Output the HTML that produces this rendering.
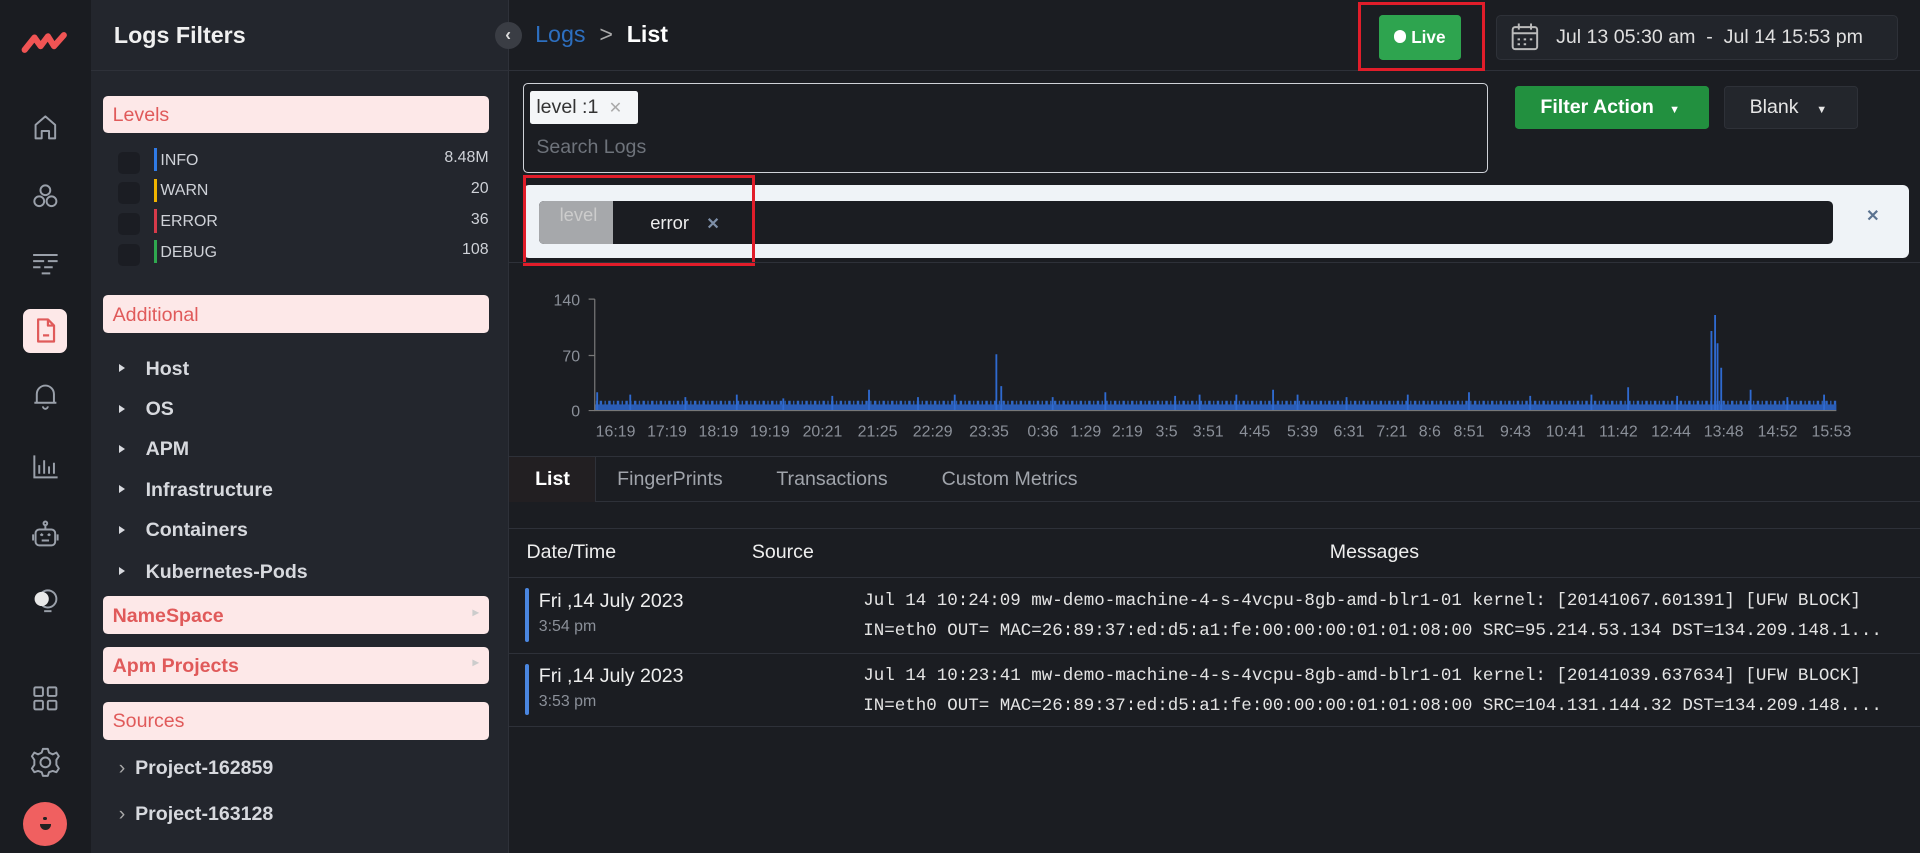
<!DOCTYPE html>
<html><head><meta charset="utf-8"><style>
*{box-sizing:border-box;margin:0;padding:0}
html,body{width:1920px;height:853px;overflow:hidden;background:#1b1d22}
#r{zoom:1.22449;width:1568px;height:697px;position:relative;font-family:"Liberation Sans",sans-serif;color:#e6e6e6;background:#1b1d22}
.a{position:absolute}
.rail{left:0;top:0;width:74px;height:697px;background:#1a1c21}
.panel{left:74px;top:0;width:342px;height:697px;background:#23262d;border-right:1px solid #2e3139}
.hdr{left:84px;width:315px;height:31px;background:#fde8e8;border-radius:4px;color:#e05a5a;font-size:16px;padding:7px 8px}
.lv{left:96px;font-size:13px;color:#cfd2d8}
.cb{left:96px;width:18px;height:18px;border-radius:4px;background:#1b1d23}
.bar{left:126px;width:2px;height:19px}
.num{right:1169px;font-size:13px;color:#cfd2d8;text-align:right}
.tr{left:97px;font-size:16px;font-weight:bold;color:#d7d9de}
.tr:before{content:"";display:inline-block;border-left:5px solid #d7d9de;border-top:4px solid transparent;border-bottom:4px solid transparent;margin-right:17px;vertical-align:2px}
.ic{left:22px;width:30px;height:30px}
.ic svg{width:30px;height:30px;fill:none;stroke:#9aa0aa;stroke-width:1.6}
.mono{font-family:"Liberation Mono",monospace;font-size:14.3px;color:#e4e4e4;left:705px;white-space:nowrap}
</style></head><body><div id="r">
<div class="a rail"></div>
<svg class="a" style="left:17px;top:24px" width="40" height="22" viewBox="0 0 40 22"><path d="M3 17 L11 7 L16 14 L22 6 L27 14 L35 5" stroke="#f05454" stroke-width="5" fill="none" stroke-linejoin="round" stroke-linecap="round"/></svg>
<div class="a ic" style="top:89px"><svg viewBox="0 0 30 30"><path d="M7 24V13L15 6L23 13V24H18V18H12V24Z" stroke-linejoin="round"/></svg></div>
<div class="a ic" style="top:145px"><svg viewBox="0 0 30 30"><circle cx="15" cy="10" r="4"/><circle cx="10" cy="19" r="4"/><circle cx="20" cy="19" r="4"/></svg></div>
<div class="a ic" style="top:199px"><svg viewBox="0 0 30 30"><path d="M5 9H25M5 14H14M17 14H25M5 19H11M14 19H21M12 24H19"/></svg></div>
<div class="a" style="left:19px;top:252px;width:36px;height:36px;background:#fde8e8;border-radius:6px"></div>
<svg class="a" style="left:26px;top:259px" width="22" height="22" viewBox="0 0 22 22"><path d="M5 2H13L18 7V20H5Z M13 2V7H18 M9 15H14" fill="none" stroke="#e05a5a" stroke-width="1.8" stroke-linejoin="round"/></svg>
<div class="a ic" style="top:308px"><svg viewBox="0 0 30 30"><path d="M8 21V14A7 7 0 0 1 22 14V21H8M6 21H24M13 24A2 2 0 0 0 17 24"/></svg></div>
<div class="a ic" style="top:366px"><svg viewBox="0 0 30 30"><path d="M6 6V24H25M10 21V14M14 21V10M18 21V15M22 21V12"/></svg></div>
<div class="a ic" style="top:421px"><svg viewBox="0 0 30 30"><rect x="7" y="11" width="16" height="13" rx="3"/><path d="M15 11V8M5 15V20M25 15V20M11 16L12 15L13 16M17 16L18 15L19 16M12 20H18"/><circle cx="15" cy="6" r="1.5"/></svg></div>
<div class="a ic" style="top:476px"><svg viewBox="0 0 30 30"><circle cx="17" cy="13" r="7"/><circle cx="12" cy="13" r="5" fill="#e8e8e8" stroke="#e8e8e8"/><path d="M14 23H20"/></svg></div>
<div class="a ic" style="top:555px"><svg viewBox="0 0 30 30"><rect x="6" y="6" width="7" height="7" rx="1"/><rect x="17" y="6" width="7" height="7" rx="1"/><rect x="6" y="17" width="7" height="7" rx="1"/><rect x="17" y="17" width="7" height="7" rx="1"/></svg></div>
<div class="a ic" style="top:608px"><svg viewBox="0 0 30 30"><circle cx="15" cy="15" r="4"/><path d="M13 4H17L18 7L21 8.5L24 7L26 10L24 13V17L26 20L24 23L21 22L18 23L17 26H13L12 23L9 22L6 23L4 20L6 17V13L4 10L6 7L9 8.5L12 7Z" stroke-linejoin="round"/></svg></div>
<div class="a" style="left:19px;top:655px;width:36px;height:36px;background:#f06060;border-radius:50%"></div>
<div class="a" style="left:35px;top:667px;width:3px;height:3px;background:#222;border-radius:50%"></div>
<div class="a" style="left:33px;top:673px;width:9px;height:5px;background:#222;border-radius:0 0 5px 5px"></div>

<div class="a panel"></div>
<div class="a" style="left:74px;top:57px;width:342px;height:1px;background:#2e3139"></div>
<div class="a" style="left:93px;top:18px;font-size:19px;font-weight:bold;color:#f0f0f0">Logs Filters</div>
<div class="a hdr" style="top:78px">Levels</div>
<div class="a cb" style="top:124px"></div><div class="a bar" style="top:121px;background:#2f7ae5"></div><div class="a lv" style="left:131px;top:124px">INFO</div><div class="a num" style="top:122px">8.48M</div>
<div class="a cb" style="top:149px"></div><div class="a bar" style="top:146px;background:#f0b400"></div><div class="a lv" style="left:131px;top:149px">WARN</div><div class="a num" style="top:147px">20</div>
<div class="a cb" style="top:174px"></div><div class="a bar" style="top:171px;background:#d63a4a"></div><div class="a lv" style="left:131px;top:174px">ERROR</div><div class="a num" style="top:172px">36</div>
<div class="a cb" style="top:199px"></div><div class="a bar" style="top:196px;background:#2fa84f"></div><div class="a lv" style="left:131px;top:199px">DEBUG</div><div class="a num" style="top:197px">108</div>
<div class="a hdr" style="top:241px">Additional</div>
<div class="a tr" style="top:292px">Host</div>
<div class="a tr" style="top:325px">OS</div>
<div class="a tr" style="top:358px">APM</div>
<div class="a tr" style="top:391px">Infrastructure</div>
<div class="a tr" style="top:424px">Containers</div>
<div class="a tr" style="top:458px">Kubernetes-Pods</div>
<div class="a hdr" style="top:487px;font-weight:bold">NameSpace<span style="float:right;color:#ccc;font-size:10px">&#9656;</span></div>
<div class="a hdr" style="top:528px;font-weight:bold">Apm Projects<span style="float:right;color:#ccc;font-size:10px">&#9656;</span></div>
<div class="a hdr" style="top:573px">Sources</div>
<div class="a" style="left:97px;top:618px;font-size:16px;font-weight:bold;color:#d7d9de"><span style="font-weight:normal;color:#aaa;margin-right:8px">&#8250;</span>Project-162859</div>
<div class="a" style="left:97px;top:656px;font-size:16px;font-weight:bold;color:#d7d9de"><span style="font-weight:normal;color:#aaa;margin-right:8px">&#8250;</span>Project-163128</div>

<div class="a" style="left:404px;top:18px;width:22px;height:22px;border-radius:50%;background:#3a3d44;color:#ddd;font-size:14px;text-align:center;line-height:21px;font-weight:bold">&#8249;</div>
<div class="a" style="left:416px;top:57px;width:1152px;height:1px;background:#2e3139"></div>
<div class="a" style="left:437px;top:17px;font-size:19px"><span style="color:#2d6fc0">Logs</span> <span style="color:#aaa;margin:0 6px">&gt;</span> <span style="color:#fff;font-weight:bold">List</span></div>
<div class="a" style="left:1109px;top:2px;width:104px;height:56px;border:3px solid #e11d2a"></div>
<div class="a" style="left:1126px;top:12px;width:67px;height:37px;background:#2ea44f;border-radius:3px;color:#fff;font-size:14px;font-weight:bold;line-height:37px;text-align:center"><span style="display:inline-block;width:10px;height:10px;background:#fff;border-radius:50%;margin-right:4px"></span>Live</div>
<div class="a" style="left:1222px;top:12px;width:328px;height:37px;background:#22252b;border:1px solid #2e3138;border-radius:4px;font-size:16px;color:#e0e0e0;line-height:35px;padding-left:48px">Jul 13 05:30 am &nbsp;- &nbsp;Jul 14 15:53 pm</div>
<svg class="a" style="left:1232px;top:17px" width="26" height="26" viewBox="0 0 26 26" fill="none" stroke="#bbb" stroke-width="1.6"><rect x="3" y="5" width="20" height="18" rx="2"/><path d="M3 10H23M8 2V7M18 2V7M7 15H9M12 15H14M17 15H19M7 19H9M12 19H14"/></svg>

<div class="a" style="left:427px;top:68px;width:788px;height:73px;border:1px solid #cfd2d8;border-radius:4px"></div>
<div class="a" style="left:433px;top:74px;width:88px;height:27px;background:#f4f6f8;border-radius:2px;color:#333;font-size:16px;padding:4px 5px">level :1 <span style="color:#aaa;font-size:13px;margin-left:4px">&#10005;</span></div>
<div class="a" style="left:438px;top:111px;font-size:16px;color:#6e737b">Search Logs</div>
<div class="a" style="left:1237px;top:70px;width:159px;height:35px;background:#22903f;border-radius:3px;color:#fff;font-size:16px;font-weight:bold;line-height:35px;padding-left:21px">Filter Action <span style="font-size:9px;margin-left:8px">&#9660;</span></div>
<div class="a" style="left:1408px;top:70px;width:109px;height:35px;background:#23262c;border:1px solid #2e3138;border-radius:3px;color:#e6e6e6;font-size:16px;line-height:33px;padding-left:20px">Blank <span style="font-size:9px;margin-left:10px">&#9660;</span></div>

<div class="a" style="left:427px;top:151px;width:1132px;height:60px;background:#eff3f7;border-radius:5px"></div>
<div class="a" style="left:440px;top:164px;width:1057px;height:35px;background:#1b1d22;border-radius:4px"></div>
<div class="a" style="left:440px;top:164px;width:61px;height:35px;background:#a6a8ab;border-radius:4px 0 0 4px;color:#ccc;font-size:15px;padding:3px 0 0 17px">level</div>
<div class="a" style="left:531px;top:173px;font-size:15px;color:#eee">error <span style="color:#7e8fa8;font-size:13px;font-weight:bold;margin-left:10px">&#10005;</span></div>
<div class="a" style="left:1524px;top:168px;color:#5a7290;font-size:13px;font-weight:bold">&#10005;</div>
<div class="a" style="left:427px;top:143px;width:190px;height:74px;border:3px solid #e11d2a"></div>
<div class="a" style="left:416px;top:214px;width:1152px;height:1px;background:#2e3139"></div>

<svg class="a" style="left:416px;top:230px" width="1152" height="135" viewBox="416 230 1152 135">
<defs><pattern id="p" width="7" height="20" patternUnits="userSpaceOnUse"><rect width="2" height="20" fill="#2f67c6"/><rect x="4" y="4" width="1" height="16" fill="#2f67c6"/></pattern></defs>
<rect x="486" y="327" width="1014" height="8" fill="url(#p)"/>
<rect x="486" y="330" width="1014" height="5" fill="#2a5cb5"/>
<g stroke="#2f6ad0" stroke-width="1.5">
<path d="M488 335V320M515 335V322M560 335V324M602 335V322M640 335V325M680 335V323M710 335V318M750 335V324M780 335V322M814 335V289M818 335V315M860 335V324M903 335V320M960 335V323M980 335V322M1010 335V322M1040 335V318M1060 335V322M1100 335V324M1150 335V322M1200 335V320M1250 335V323M1300 335V322M1330 335V316M1370 335V323M1398 335V270M1401 335V257M1403 335V280M1406 335V300M1430 335V318M1460 335V324M1490 335V322"/>
</g>
<path d="M486 244V335H1500" stroke="#777" fill="none"/>
<path d="M481 244H486M481 290H486M481 335H486" stroke="#777"/>
<text x="474" y="249" fill="#8b9099" font-size="13" text-anchor="end" font-family="Liberation Sans">140</text>
<text x="474" y="295" fill="#8b9099" font-size="13" text-anchor="end" font-family="Liberation Sans">70</text>
<text x="474" y="340" fill="#8b9099" font-size="13" text-anchor="end" font-family="Liberation Sans">0</text>
<text y="356" fill="#8b9099" font-size="13" font-family="Liberation Sans" text-anchor="middle">
<tspan x="503">16:19</tspan><tspan x="545">17:19</tspan><tspan x="587">18:19</tspan><tspan x="629">19:19</tspan><tspan x="672">20:21</tspan><tspan x="717">21:25</tspan><tspan x="762">22:29</tspan><tspan x="808">23:35</tspan><tspan x="852">0:36</tspan><tspan x="887">1:29</tspan><tspan x="921">2:19</tspan><tspan x="953">3:5</tspan><tspan x="987">3:51</tspan><tspan x="1025">4:45</tspan><tspan x="1064">5:39</tspan><tspan x="1102">6:31</tspan><tspan x="1137">7:21</tspan><tspan x="1168">8:6</tspan><tspan x="1200">8:51</tspan><tspan x="1238">9:43</tspan><tspan x="1279">10:41</tspan><tspan x="1322">11:42</tspan><tspan x="1365">12:44</tspan><tspan x="1408">13:48</tspan><tspan x="1452">14:52</tspan><tspan x="1496">15:53</tspan></text>
</svg>

<div class="a" style="left:416px;top:372px;width:1152px;height:1px;background:#2e3139"></div>
<div class="a" style="left:416px;top:373px;width:70px;height:37px;background:#221f22"></div>
<div class="a" style="left:486px;top:409px;width:1082px;height:1px;background:#2e3139"></div>
<div class="a" style="left:486px;top:373px;width:1px;height:37px;background:#2e3139"></div>
<div class="a" style="left:437px;top:382px;font-size:16px;font-weight:bold;color:#fff">List</div>
<div class="a" style="left:504px;top:382px;font-size:16px;color:#a0a4ab">FingerPrints</div>
<div class="a" style="left:634px;top:382px;font-size:16px;color:#a0a4ab">Transactions</div>
<div class="a" style="left:769px;top:382px;font-size:16px;color:#a0a4ab">Custom Metrics</div>
<div class="a" style="left:416px;top:431px;width:1152px;height:1px;background:#2e3139"></div>
<div class="a" style="left:430px;top:442px;font-size:16px;color:#eee">Date/Time</div>
<div class="a" style="left:614px;top:442px;font-size:16px;color:#eee">Source</div>
<div class="a" style="left:1086px;top:442px;font-size:16px;color:#eee">Messages</div>
<div class="a" style="left:416px;top:471px;width:1152px;height:1px;background:#2e3139"></div>
<div class="a" style="left:429px;top:480px;width:3px;height:44px;background:#4a86e0;border-radius:2px"></div>
<div class="a" style="left:440px;top:482px;font-size:16px;color:#eee">Fri ,14 July 2023</div>
<div class="a" style="left:440px;top:505px;font-size:13px;color:#8b9099">3:54 pm</div>
<div class="a mono" style="top:483px">Jul 14 10:24:09 mw-demo-machine-4-s-4vcpu-8gb-amd-blr1-01 kernel: [20141067.601391] [UFW BLOCK]</div>
<div class="a mono" style="top:507px">IN=eth0 OUT= MAC=26:89:37:ed:d5:a1:fe:00:00:00:01:01:08:00 SRC=95.214.53.134 DST=134.209.148.1...</div>
<div class="a" style="left:416px;top:533px;width:1152px;height:1px;background:#2e3139"></div>
<div class="a" style="left:429px;top:542px;width:3px;height:42px;background:#4a86e0;border-radius:2px"></div>
<div class="a" style="left:440px;top:543px;font-size:16px;color:#eee">Fri ,14 July 2023</div>
<div class="a" style="left:440px;top:566px;font-size:13px;color:#8b9099">3:53 pm</div>
<div class="a mono" style="top:544px">Jul 14 10:23:41 mw-demo-machine-4-s-4vcpu-8gb-amd-blr1-01 kernel: [20141039.637634] [UFW BLOCK]</div>
<div class="a mono" style="top:568px">IN=eth0 OUT= MAC=26:89:37:ed:d5:a1:fe:00:00:00:01:01:08:00 SRC=104.131.144.32 DST=134.209.148....</div>
<div class="a" style="left:416px;top:593px;width:1152px;height:1px;background:#2e3139"></div>
</div></body></html>
